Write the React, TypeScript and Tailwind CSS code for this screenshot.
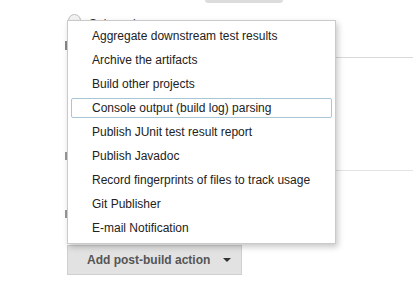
const menuItems = [
  "Aggregate downstream test results",
  "Archive the artifacts",
  "Build other projects",
  "Console output (build log) parsing",
  "Publish JUnit test result report",
  "Publish Javadoc",
  "Record fingerprints of files to track usage",
  "Git Publisher",
  "E-mail Notification",
];

const focusedItem = "Console output (build log) parsing";

function PageBehind() {
  return (
    <div className="flex flex-col">
      <div className="ml-[205px] h-[3px] w-[78px] rounded-b-sm bg-[#dcdcdc]" />
      <div className="ml-[68px] mt-[11px] flex h-[13px] items-center gap-[8px]">
        <span className="size-[13px] rounded-full border border-[#bdbdbd] bg-[#f2f2f2]" />
        <span className="pt-[6px] text-[12px] text-[#333]">Subversion</span>
      </div>
      <div className="ml-[65px] mt-[14px] h-[9px] w-[2px] bg-[#888]" />
      <div className="ml-[67px] mt-[7px] h-px bg-[#d9d9d9]" />
      <div className="ml-[65px] mt-[94px] h-[8px] w-[2px] bg-[#999]" />
      <div className="ml-[67px] mt-[10px] h-px bg-[#e3e3e3]" />
      <div className="ml-[65px] mt-[39px] h-[8px] w-[2px] bg-[#999]" />
      <div className="ml-[67px] mt-[27px]">
        <button
          type="button"
          className="flex h-[30px] w-[175px] items-center justify-between border border-[#cfcfcf] bg-[#e2e2e2] pl-[19px] pr-[10px] text-[12px] font-bold text-[#555]"
        >
          Add post-build action
          <span className="h-0 w-0 border-x-[4px] border-t-[4px] border-x-transparent border-t-[#333]" />
        </button>
      </div>
    </div>
  );
}

function ActionMenu() {
  return (
    <ul className="absolute left-[67px] top-[20px] w-[269px] border border-[#cacaca] bg-white pb-[3px] pt-[3px] shadow-[2px_3px_6px_rgba(0,0,0,0.22)]">
      {menuItems.map((item) => (
        <li key={item} className="px-[3px] py-[2px]">
          <div
            className={`flex h-[20px] items-center rounded-[2px] border pl-[20px] text-[12px] text-[#222] ${
              item === focusedItem ? "border-[#a8c5d5]" : "border-transparent"
            }`}
          >
            {item}
          </div>
        </li>
      ))}
    </ul>
  );
}

export default function App() {
  return (
    <div className="relative h-[290px] w-[413px] overflow-hidden bg-white font-['Liberation_Sans',Arial,sans-serif]">
      <PageBehind />
      <ActionMenu />
    </div>
  );
}
